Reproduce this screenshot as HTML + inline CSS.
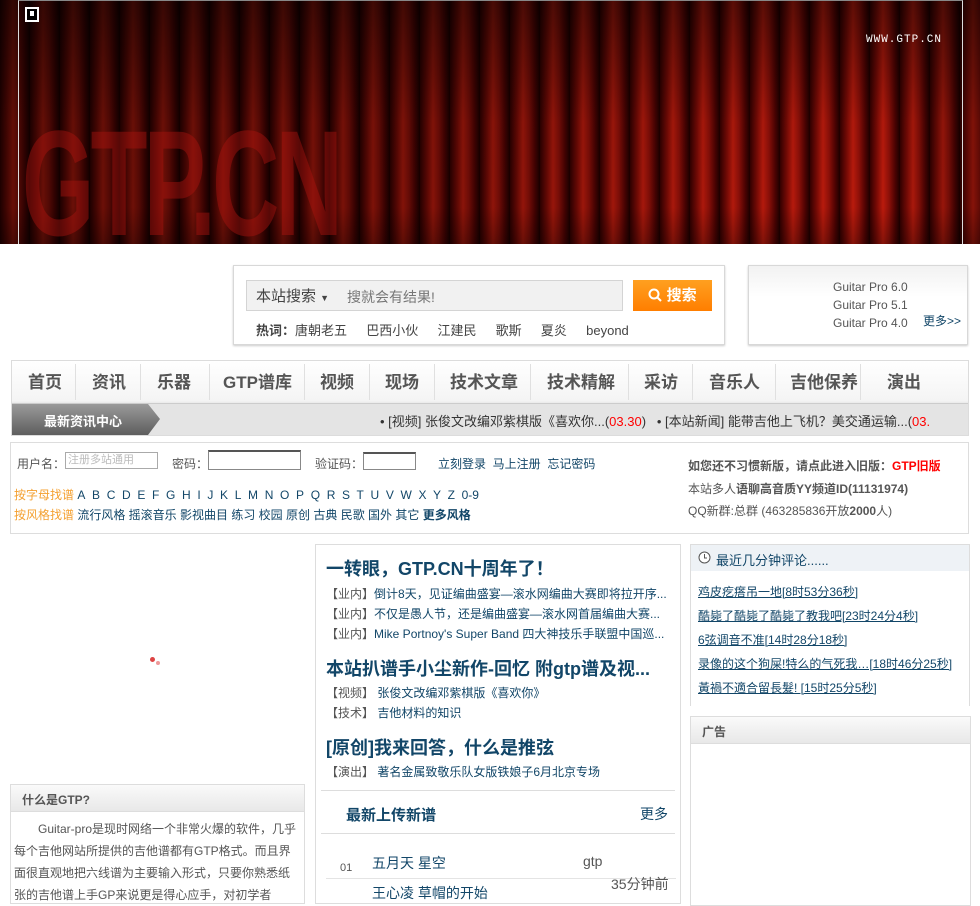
<!DOCTYPE html>
<html><head><meta charset="utf-8"><style>
*{margin:0;padding:0;box-sizing:border-box}
body{width:980px;height:891px;overflow:hidden;background:#fff;font-family:"Liberation Sans","Noto Sans CJK SC",sans-serif;font-size:12px;color:#333;position:relative}
.a{position:absolute}
a{color:#124668;text-decoration:none}
#hd{left:0;top:0;width:980px;height:244px;overflow:hidden;
background:
linear-gradient(90deg,rgba(0,0,0,.45) 0%,rgba(0,0,0,.35) 35%,rgba(0,0,0,.05) 75%,rgba(0,0,0,.0) 90%,rgba(0,0,0,.3) 100%),
linear-gradient(180deg,rgba(0,0,0,.55) 0%,rgba(0,0,0,.15) 50%,rgba(0,0,0,.1) 85%,rgba(0,0,0,.35) 100%),
repeating-linear-gradient(90deg,#3a0000 0px,#8a0c06 7px,#d01e0e 13px,#a0120a 19px,#5a0302 25px,#200000 30px);}
#hd .bd{left:18px;top:0;width:945px;height:245px;border:1px solid #ddd;border-top-color:#888}
#hd .logo{left:22px;top:108px;font:bold 150px "Liberation Sans",sans-serif;color:rgba(170,20,15,.45);letter-spacing:-6px;transform:scaleX(.62);transform-origin:left;line-height:1}
.box{border:1px solid #d8d8d8;box-shadow:0 1px 2px #ccc}
.nav a{position:absolute;top:368px;font-size:17px;font-weight:bold;color:#555}
.sep{position:absolute;top:364px;width:1px;height:36px;background:#e0e0e0}
.ttl{font-size:18px;font-weight:bold;color:#124668}
.li{font-size:12px;color:#555}
.li a{color:#124668}
</style></head><body>
<div id="hd" class="a">
<div class="a bd"></div>
<div class="a" style="left:25px;top:7px;width:14px;height:15px;border:2px solid #fff;background:#000"><div style="margin:2px auto;width:4px;height:5px;background:#fff"></div></div>
<div class="a" style="left:866px;top:34px;color:#fff;font:11px 'Liberation Mono',monospace;letter-spacing:1px">WWW.GTP.CN</div>
<div class="a logo">GTP.CN</div>
</div>

<!-- search -->
<div class="a box" style="left:233px;top:265px;width:492px;height:80px;background:#fff"></div>
<div class="a" style="left:246px;top:280px;width:377px;height:31px;background:#f1f1f1;border:1px solid #d4d4d4"></div>
<div class="a" style="left:256px;top:285px;font-size:15px;color:#444">本站搜索 <span style="font-size:9px">▼</span></div>
<div class="a" style="left:347px;top:287px;font-size:14px;color:#777">搜就会有结果!</div>
<div class="a" style="left:633px;top:280px;width:79px;height:31px;background:linear-gradient(#ffa020,#ff7e00);color:#fff;font-size:15px;font-weight:bold;text-align:center;line-height:31px">
<svg width="14" height="14" viewBox="0 0 14 14" style="vertical-align:-2px"><circle cx="6" cy="6" r="4.5" fill="none" stroke="#fff" stroke-width="2"/><path d="M9 9l4 4" stroke="#fff" stroke-width="2"/></svg> 搜索</div>
<div class="a" style="left:256px;top:320px;font-size:13px;color:#444;word-spacing:6px"><b>热词：</b>唐朝老五&nbsp; 巴西小伙&nbsp; 江建民&nbsp; 歌斯&nbsp; 夏炎&nbsp; beyond</div>

<div class="a box" style="left:748px;top:265px;width:220px;height:80px;background:linear-gradient(#f2f2f2,#fff 40%)"></div>
<div class="a" style="left:833px;top:278px;font-size:12px;color:#555;line-height:18px">Guitar Pro 6.0<br>Guitar Pro 5.1<br>Guitar Pro 4.0</div>
<div class="a" style="left:923px;top:312px;font-size:12px;color:#124668">更多&gt;&gt;</div>

<!-- nav -->
<div class="a" style="left:11px;top:360px;width:958px;height:76px;border:1px solid #dcdcdc;background:linear-gradient(#fff,#f4f4f4 40px,#e4e4e4 43px,#e4e4e4)"></div>
<div class="a" style="left:12px;top:403px;width:956px;height:1px;background:#ccc"></div>
<div class="nav">
<a style="left:28px">首页</a><a style="left:92px">资讯</a><a style="left:157px">乐器</a><a style="left:223px">GTP谱库</a><a style="left:320px">视频</a><a style="left:385px">现场</a><a style="left:450px">技术文章</a><a style="left:547px">技术精解</a><a style="left:644px">采访</a><a style="left:709px">音乐人</a><a style="left:790px">吉他保养</a><a style="left:887px">演出</a>
</div>
<div class="sep" style="left:75px"></div><div class="sep" style="left:140px"></div><div class="sep" style="left:209px"></div><div class="sep" style="left:304px"></div><div class="sep" style="left:369px"></div><div class="sep" style="left:434px"></div><div class="sep" style="left:530px"></div><div class="sep" style="left:628px"></div><div class="sep" style="left:692px"></div><div class="sep" style="left:775px"></div><div class="sep" style="left:860px"></div>
<svg class="a" style="left:12px;top:404px" width="150" height="31"><defs><linearGradient id="g" x1="0" y1="0" x2="0" y2="1"><stop offset="0" stop-color="#9a9a9a"/><stop offset="1" stop-color="#5e5e5e"/></linearGradient></defs><path d="M0 0H136L148 15L136 31H0Z" fill="url(#g)"/></svg>
<div class="a" style="left:44px;top:411px;color:#fff;font-size:13px;font-weight:bold">最新资讯中心</div>
<div class="a" style="left:380px;top:411px;font-size:13px;color:#333;white-space:nowrap">• [视频] 张俊文改编邓紫棋版《喜欢你...(<span style="color:red">03.30</span>)&nbsp;&nbsp; • [本站新闻] 能带吉他上飞机？美交通运输...(<span style="color:red">03.</span></div>

<!-- login -->
<div class="a" style="left:10px;top:442px;width:959px;height:92px;border:1px solid #ddd"></div>
<div class="a" style="left:17px;top:455px;color:#555;font-size:12px">用户名：</div>
<div class="a" style="left:65px;top:452px;width:93px;height:17px;border:1px solid #aaa;color:#bbb;font-size:11px;line-height:15px;padding-left:2px">注册多站通用</div>
<div class="a" style="left:172px;top:455px;color:#555">密码：</div>
<div class="a" style="left:208px;top:450px;width:93px;height:20px;border:1px solid #888;border-top:2px solid #555"></div>
<div class="a" style="left:315px;top:455px;color:#555">验证码：</div>
<div class="a" style="left:363px;top:452px;width:53px;height:18px;border:1px solid #888;border-top:2px solid #555"></div>
<div class="a" style="left:438px;top:455px;font-size:12px;color:#124668">立刻登录&nbsp; 马上注册&nbsp; 忘记密码</div>
<div class="a" style="left:14px;top:486px;font-size:12px;color:#124668"><span style="color:#f4a030">按字母找谱</span> A&nbsp; B&nbsp; C&nbsp; D&nbsp; E&nbsp; F&nbsp; G&nbsp; H&nbsp; I&nbsp; J&nbsp; K&nbsp; L&nbsp; M&nbsp; N&nbsp; O&nbsp; P&nbsp; Q&nbsp; R&nbsp; S&nbsp; T&nbsp; U&nbsp; V&nbsp; W&nbsp; X&nbsp; Y&nbsp; Z&nbsp; 0-9</div>
<div class="a" style="left:14px;top:506px;font-size:12px;color:#124668"><span style="color:#f4a030">按风格找谱</span> 流行风格 摇滚音乐 影视曲目 练习 校园 原创 古典 民歌 国外 其它 <b>更多风格</b></div>
<div class="a" style="left:688px;top:457px;font-size:12px;color:#555;font-weight:bold">如您还不习惯新版，请点此进入旧版：<span style="color:red">GTP旧版</span></div>
<div class="a" style="left:688px;top:480px;font-size:12px;color:#555">本站多人<b>语聊高音质YY频道ID(11131974)</b></div>
<div class="a" style="left:688px;top:502px;font-size:12px;color:#555">QQ新群:总群 (463285836开放<b>2000</b>人)</div>

<!-- left -->
<div class="a" style="left:150px;top:657px;width:5px;height:5px;border-radius:50%;background:#d44"></div>
<div class="a" style="left:156px;top:661px;width:4px;height:4px;border-radius:50%;background:#e99"></div>
<div class="a" style="left:10px;top:784px;width:295px;height:120px;border:1px solid #ddd"></div>
<div class="a" style="left:11px;top:785px;width:293px;height:27px;background:linear-gradient(#fafafa,#e8e8e8);border-bottom:1px solid #ddd"></div>
<div class="a" style="left:22px;top:791px;font-size:12px;font-weight:bold;color:#555">什么是GTP?</div>
<div class="a" style="left:14px;top:818px;width:285px;font-size:12px;color:#555;line-height:22px;text-indent:2em">Guitar-pro是现时网络一个非常火爆的软件，几乎每个吉他网站所提供的吉他谱都有GTP格式。而且界面很直观地把六线谱为主要输入形式，只要你熟悉纸张的吉他谱上手GP来说更是得心应手，对初学者</div>

<!-- middle -->
<div class="a" style="left:315px;top:544px;width:366px;height:360px;border:1px solid #ddd"></div>
<div class="a ttl" style="left:326px;top:555px">一转眼，GTP.CN十周年了！</div>
<div class="a li" style="left:326px;top:584px;line-height:20px;width:340px;white-space:nowrap;overflow:hidden">【业内】<a>倒计8天，见证编曲盛宴—滚水网编曲大赛即将拉开序...</a><br>【业内】<a>不仅是愚人节，还是编曲盛宴—滚水网首届编曲大赛...</a><br>【业内】<a>Mike Portnoy's Super Band 四大神技乐手联盟中国巡...</a></div>
<div class="a ttl" style="left:326px;top:655px">本站扒谱手小尘新作-回忆 附gtp谱及视...</div>
<div class="a li" style="left:326px;top:683px;line-height:20px">【视频】 <a>张俊文改编邓紫棋版《喜欢你》</a><br>【技术】 <a>吉他材料的知识</a></div>
<div class="a ttl" style="left:326px;top:734px">[原创]我来回答，什么是推弦</div>
<div class="a li" style="left:326px;top:763px">【演出】 <a>著名金属致敬乐队女版铁娘子6月北京专场</a></div>
<div class="a" style="left:321px;top:790px;width:354px;height:1px;background:#ddd"></div>
<div class="a" style="left:346px;top:804px;font-size:15px;font-weight:bold;color:#124668">最新上传新谱</div>
<div class="a" style="left:640px;top:804px;font-size:14px;color:#124668">更多</div>
<div class="a" style="left:321px;top:833px;width:354px;height:1px;background:#ddd"></div>
<div class="a" style="left:340px;top:862px;font-size:11px;color:#555">01</div>
<div class="a" style="left:372px;top:853px;font-size:14px;color:#124668">五月天 星空</div>
<div class="a" style="left:583px;top:853px;font-size:14px;color:#555">gtp</div>
<div class="a" style="left:326px;top:878px;width:350px;height:1px;background:#e4e4e4"></div>
<div class="a" style="left:611px;top:874px;font-size:14px;color:#555">35分钟前</div>
<div class="a" style="left:372px;top:883px;font-size:14px;color:#124668">王心凌 草帽的开始</div>

<!-- right -->
<div class="a" style="left:690px;top:544px;width:280px;height:162px;border:1px solid #ddd;overflow:hidden"></div>
<div class="a" style="left:691px;top:545px;width:278px;height:26px;background:#eef2f6"></div>
<svg class="a" style="left:698px;top:551px" width="13" height="13"><circle cx="6.5" cy="6.5" r="5.5" fill="#fff" stroke="#555"/><path d="M6.5 3v4h2.5" stroke="#555" fill="none"/></svg>
<div class="a" style="left:716px;top:550px;font-size:13px;color:#124668">最近几分钟评论......</div>
<div class="a" style="left:698px;top:580px;font-size:12px;line-height:24px;white-space:nowrap">
<a style="text-decoration:underline">鸡皮疙瘩吊一地[8时53分36秒]</a><br>
<a style="text-decoration:underline">酷毙了酷毙了酷毙了教我吧[23时24分4秒]</a><br>
<a style="text-decoration:underline">6弦调音不准[14时28分18秒]</a><br>
<a style="text-decoration:underline">录像的这个狗屎!特么的气死我…[18时46分25秒]</a><br>
<a style="text-decoration:underline">黃禍不適合留長髮! [15时25分5秒]</a></div>
<div class="a" style="left:691px;top:704px;width:278px;height:3px;background:#fff"></div>
<div class="a" style="left:690px;top:716px;width:281px;height:190px;border:1px solid #ddd"></div>
<div class="a" style="left:691px;top:717px;width:279px;height:27px;background:linear-gradient(#fafafa,#e8e8e8);border-bottom:1px solid #ddd"></div>
<div class="a" style="left:702px;top:723px;font-size:12px;font-weight:bold;color:#555">广告</div>
</body></html>
